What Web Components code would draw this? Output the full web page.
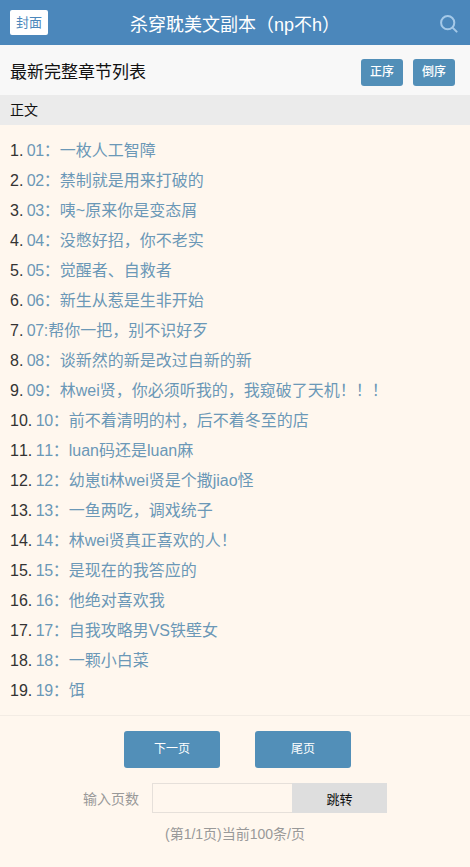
<!DOCTYPE html>
<html lang="zh">
<head>
<meta charset="utf-8">
<title>杀穿耽美文副本（np不h）</title>
<style>
  html, body { margin: 0; padding: 0; background: #fff7ee; }
  body { font-family: "Liberation Sans", "Noto Sans CJK SC", sans-serif; color: #333; }
</style>
</head>
<body>
<book-header>杀穿耽美文副本（np不h）</book-header>
<chapter-bar>最新完整章节列表</chapter-bar>
<section-title>正文</section-title>
<chapter-list></chapter-list>
<page-nav></page-nav>

<script>
class BookHeader extends HTMLElement {
  constructor() {
    super();
    this.attachShadow({ mode: 'open' });
    this.shadowRoot.innerHTML = `
      <style>
        :host { display: grid; grid-template-columns: 1fr auto 1fr; align-items: center; height: 45px; background: #4b87bb; padding: 0 10px; box-sizing: border-box; }
        .cover { justify-self: start; display: block; width: 38px; height: 25px; line-height: 25px; text-align: center; background: #fff; color: #4b87bb; font-size: 13px; border-radius: 2px; }
        .title { color: #fff; font-size: 18px; white-space: nowrap; }
        svg { justify-self: end; display: block; width: 18px; height: 18px; margin: 2px 2px 0 0; }
      </style>
      <a class="cover">封面</a>
      <div class="title"><slot></slot></div>
      <svg viewBox="0 0 18 18" fill="none" stroke="#a5c9e8" stroke-width="2">
        <circle cx="7.7" cy="7.7" r="6.6"/>
        <path d="M12.6 12.6 L16.6 16.6" stroke-linecap="round"/>
      </svg>`;
  }
}
customElements.define('book-header', BookHeader);

class ChapterBar extends HTMLElement {
  constructor() {
    super();
    this.attachShadow({ mode: 'open' });
    this.shadowRoot.innerHTML = `
      <style>
        :host { display: flex; align-items: center; height: 50px; background: #f8f8f8; padding: 0 15px 0 10px; box-sizing: border-box; color: #111; }
        .name { flex: 1; font-size: 17px; }
        .btn { width: 42px; height: 27px; line-height: 27px; text-align: center; background: #528fb8; color: #fff; font-size: 12px; border-radius: 3px; margin: 4px 0 0 10px; font-weight: 500; }
      </style>
      <div class="name"><slot></slot></div>
      <a class="btn">正序</a>
      <a class="btn">倒序</a>`;
  }
}
customElements.define('chapter-bar', ChapterBar);

class SectionTitle extends HTMLElement {
  constructor() {
    super();
    this.attachShadow({ mode: 'open' });
    this.shadowRoot.innerHTML = `
      <style>
        :host { display: block; height: 30px; line-height: 30px; background: #ebebeb; padding-left: 10px; font-size: 14px; color: #111; }
      </style>
      <slot></slot>`;
  }
}
customElements.define('section-title', SectionTitle);

const chapters = [
  '01：一枚人工智障',
  '02：禁制就是用来打破的',
  '03：咦~原来你是变态屑',
  '04：没憋好招，你不老实',
  '05：觉醒者、自救者',
  '06：新生从惹是生非开始',
  '07:帮你一把，别不识好歹',
  '08：谈新然的新是改过自新的新',
  '09：林wei贤，你必须听我的，我窥破了天机！！！',
  '10：前不着清明的村，后不着冬至的店',
  '11：luan码还是luan麻',
  '12：幼崽ti林wei贤是个撒jiao怪',
  '13：一鱼两吃，调戏统子',
  '14：林wei贤真正喜欢的人！',
  '15：是现在的我答应的',
  '16：他绝对喜欢我',
  '17：自我攻略男VS铁壁女',
  '18：一颗小白菜',
  '19：饵'
];

class ChapterList extends HTMLElement {
  constructor() {
    super();
    this.attachShadow({ mode: 'open' });
    let items = '';
    chapters.forEach(name => {
      // the digits run a little narrower than Liberation's
      const num = name.slice(0, 2);
      items += `<li><a><span>${num}</span>${name.slice(2)}</a></li>`;
    });
    this.shadowRoot.innerHTML = `
      <style>
        :host { display: block; padding: 11px 10px 9px; border-bottom: 1px solid #f3ece4; }
        ol { margin: 0; padding: 0; list-style: decimal inside; }
        li { height: 30px; line-height: 30px; font-size: 16px; color: #333; white-space: nowrap; font-kerning: none; }
        a { color: #6b98b7; margin-left: -1px; }
        span { letter-spacing: -0.4px; }
      </style>
      <ol>${items}</ol>`;
  }
}
customElements.define('chapter-list', ChapterList);

class PageNav extends HTMLElement {
  constructor() {
    super();
    this.attachShadow({ mode: 'open' });
    this.shadowRoot.innerHTML = `
      <style>
        :host { display: block; padding-top: 15px; height: 151px; box-sizing: border-box; }
        .pages { display: flex; gap: 35px; margin-left: 124px; }
        .pages a { width: 96px; height: 37px; line-height: 37px; text-align: center; background: #528fb8; color: #fff; font-size: 12px; border-radius: 3px; }
        .jump { display: flex; align-items: center; margin: 15px 0 0 83px; }
        label { width: 69px; font-size: 14px; color: #999; }
        .field { width: 140px; height: 30px; box-sizing: border-box; border: 1px solid #e6e0da; border-right: 0; background: #fff7ee; }
        button { width: 95px; height: 30px; padding: 0; border: 0; background: #dedede; color: #111; font: inherit; font-size: 13px; }
        .info { margin-top: 12px; text-align: center; font-size: 14px; line-height: 18px; color: #999; }
      </style>
      <div class="pages"><a>下一页</a><a>尾页</a></div>
      <div class="jump">
        <label>输入页数</label>
        <div class="field"></div>
        <button>跳转</button>
      </div>
      <div class="info">(第1/1页)当前100条/页</div>`;
  }
}
customElements.define('page-nav', PageNav);
</script>
</body>
</html>
